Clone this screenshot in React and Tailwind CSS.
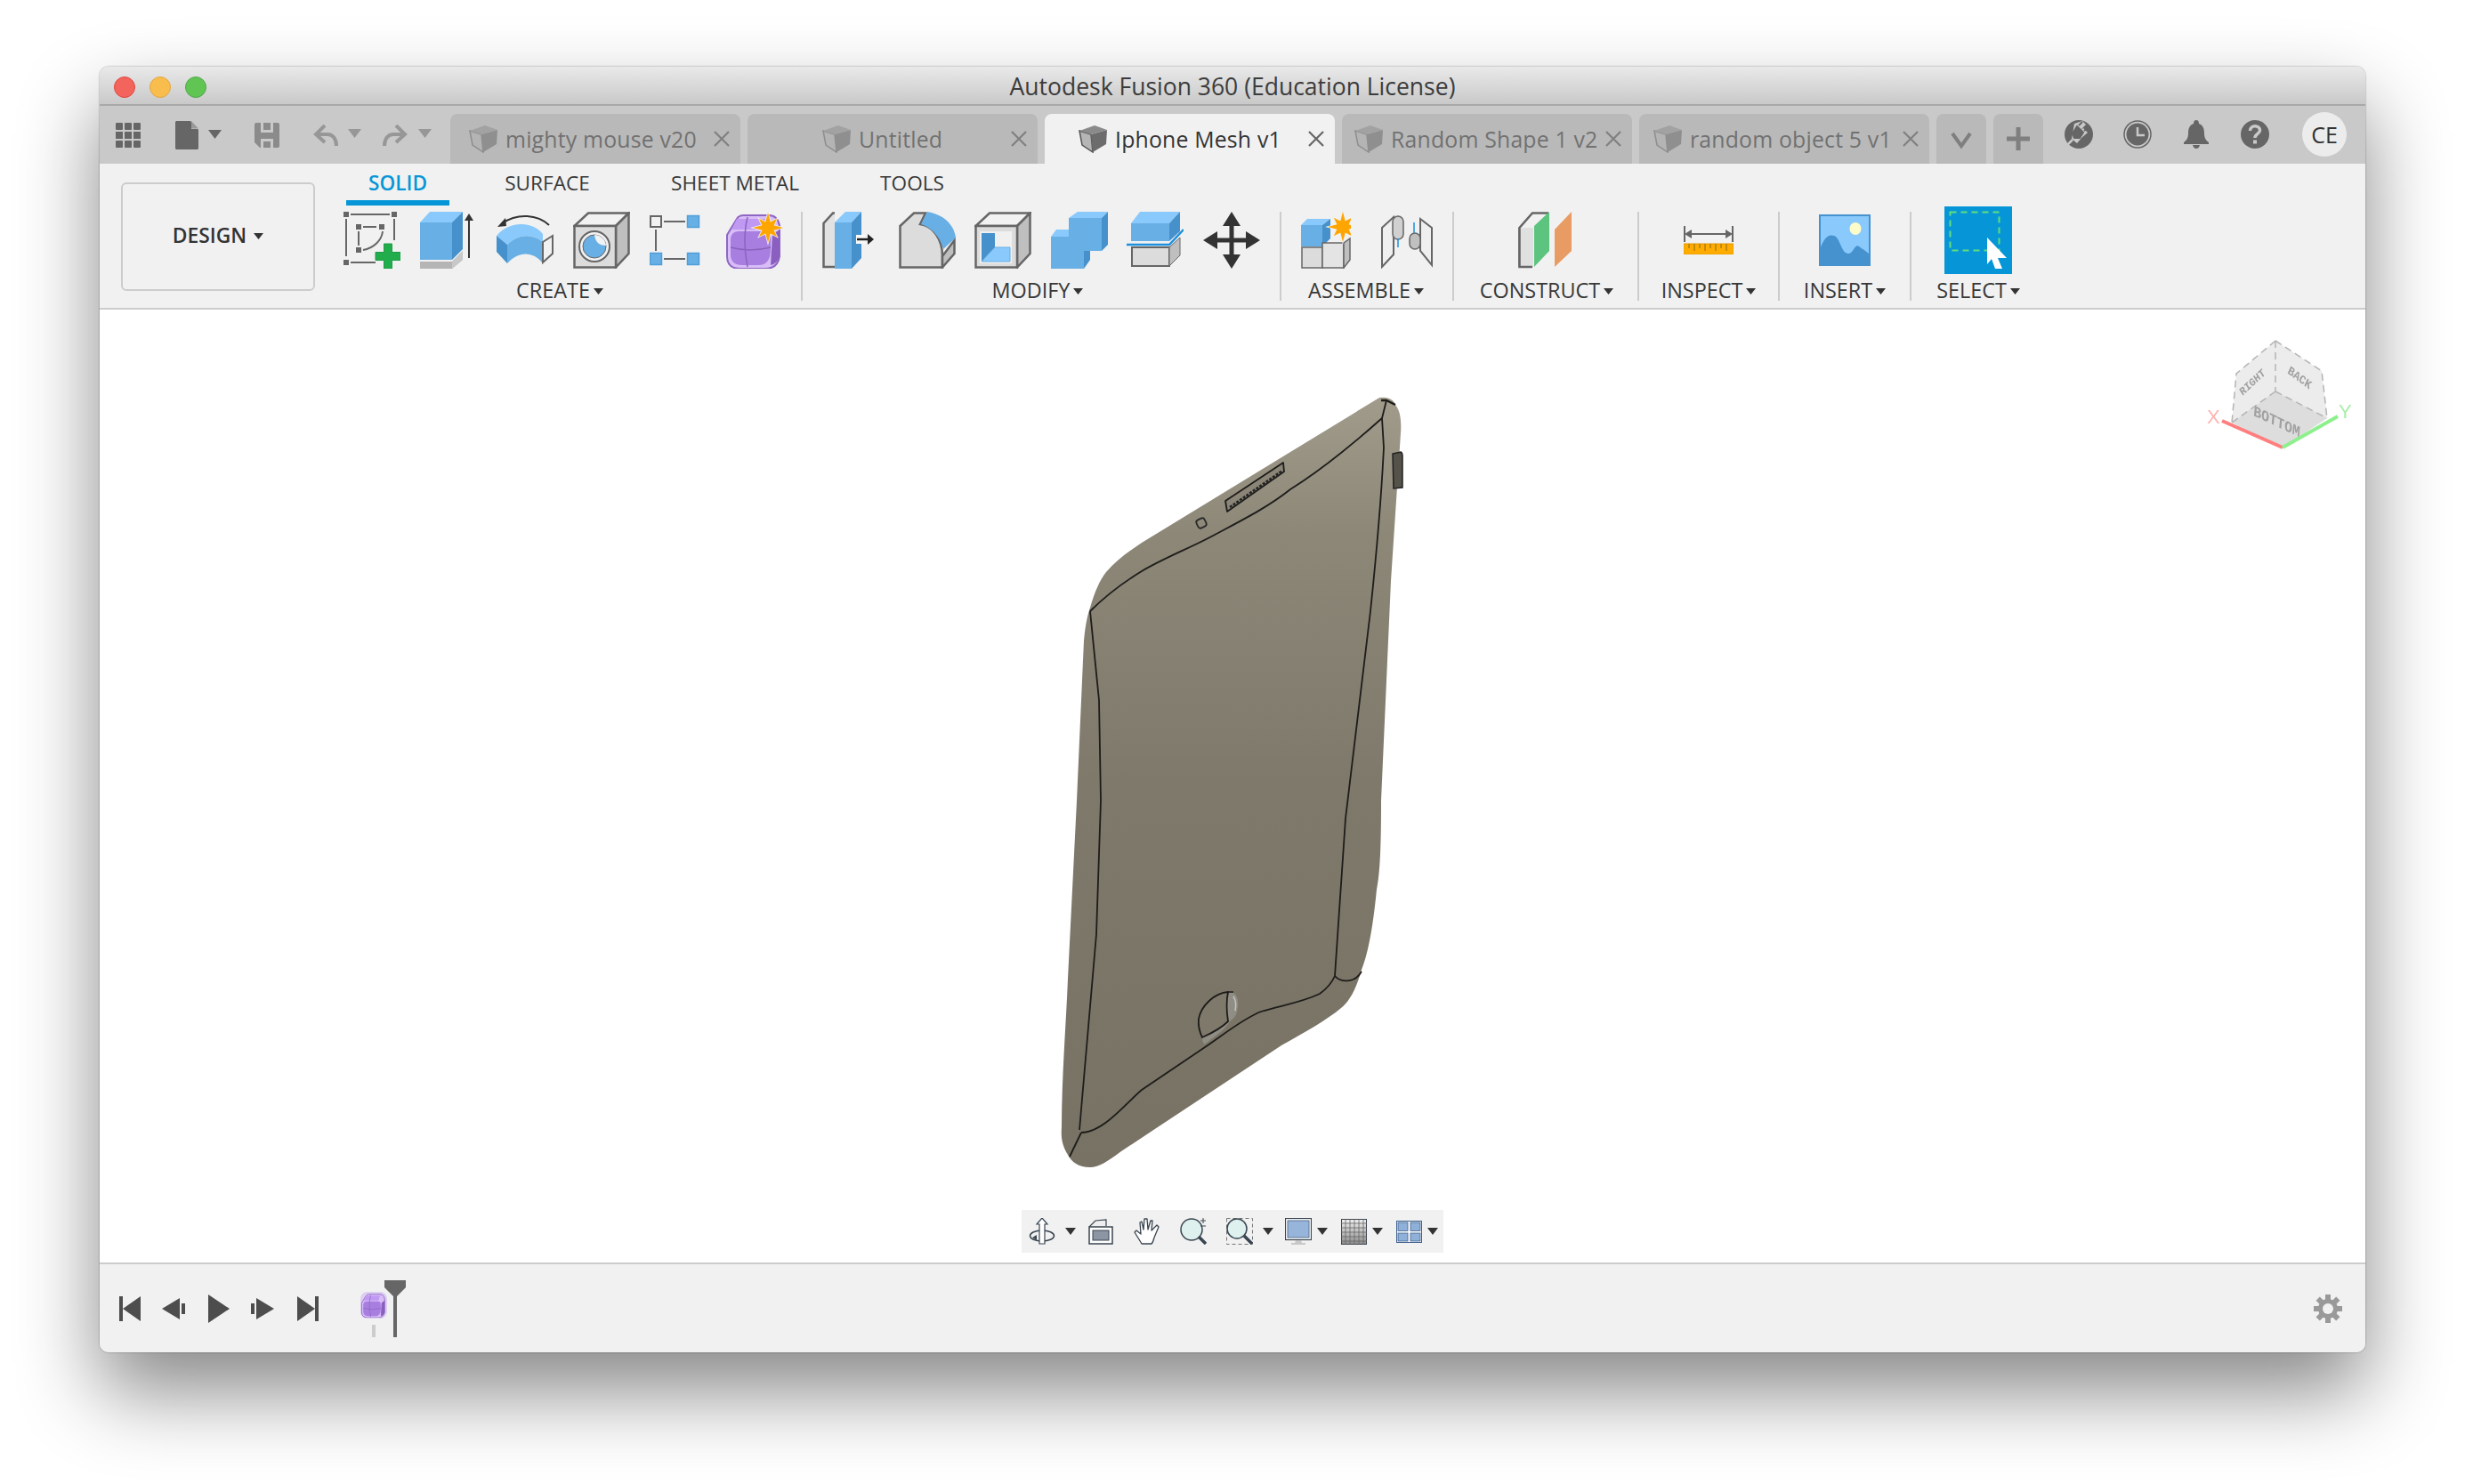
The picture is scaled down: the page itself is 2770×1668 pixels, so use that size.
import React from "react";

const FONT = "font-['Open_Sans','Noto_Sans',sans-serif]";

const BLUE = "#68afe5";
const BLUE_LIGHT = "#8ac9fb";
const BLUE_DARK = "#4691cb";
const LINE = "#666666";

function Star({ cx, cy, r }) {
  const pts = [];
  for (let i = 0; i < 16; i++) {
    const rad = i % 2 === 0 ? (i % 4 === 0 ? r : r * 0.85) : r * 0.42;
    const a = (i * Math.PI) / 8 - Math.PI / 2;
    pts.push(`${cx + rad * Math.cos(a)},${cy + rad * Math.sin(a)}`);
  }
  return <polygon points={pts.join(" ")} fill="#ffa500" stroke="#f2f2f2" strokeWidth="1.5" paintOrder="stroke" />;
}

function Box({ children, w = 64, h = 64 }) {
  return (
    <svg width={w} height={h} viewBox={`0 0 ${w} ${h}`} className="shrink-0">
      {children}
    </svg>
  );
}

const SketchIcon = () => (
  <Box>
    <g fill={LINE}>
      <rect x="0" y="0" width="6" height="6" />
      <rect x="54" y="0" width="6" height="6" />
      <rect x="0" y="54" width="6" height="6" />
      <rect x="14" y="14" width="6" height="6" />
      <rect x="40" y="14" width="6" height="6" />
      <rect x="14" y="40" width="6" height="6" />
    </g>
    <g stroke={LINE} strokeWidth="2" fill="none">
      <path d="M8 3H52M3 8V50M57 8V32M8 57H36M22 17H37M17 22V38M44 22C43 32 34 41 22 43" />
    </g>
    <path d="M45.5 36h9v9.500h9.500v9h-9.500V64h-9v-9.500H36v-9h9.500z" fill="#22ad4d" stroke="#1f9c45" strokeWidth="1" />
  </Box>
);

const ExtrudeIcon = () => (
  <Box>
    <polygon points="0,12 11,0 48,0 36,12" fill={BLUE_LIGHT} />
    <rect x="0" y="12" width="36" height="42" fill={BLUE} />
    <polygon points="36,12 48,0 48,42 36,54" fill={BLUE_DARK} />
    <polygon points="0,56 36,56 48,44 48,54 36,64 0,64" fill="#b5b5b5" />
    <polygon points="36,56 48,44 48,54 36,64" fill="#c8c8c8" />
    <path d="M55 52V8" stroke="#333" strokeWidth="2" />
    <polygon points="50,10 55,2 60,10" fill="#333" />
  </Box>
);

const RevolveIcon = () => (
  <Box>
    <path d="M59 15C46 3 24 1 6 13" stroke="#333" strokeWidth="2" fill="none" />
    <polygon points="1,17 10,7 11,16" fill="#333" />
    <path d="M0 27C14 10 40 10 52 25V34C40 24 24 25 12 37Z" fill={BLUE_LIGHT} />
    <path d="M12 37C24 25 40 24 52 34V58C40 43 24 45 12 58Z" fill={BLUE} />
    <path d="M0 27L12 37V58L0 45Z" fill={BLUE_DARK} />
    <polygon points="52,34 63,27 63,47 52,57" fill="#f2f2f2" stroke={LINE} strokeWidth="2" />
  </Box>
);

const HoleIcon = () => (
  <Box>
    <polygon points="1.500,16 17,1.500 62.500,1.500 48,16" fill="#f2f2f2" stroke={LINE} strokeWidth="2.500" />
    <polygon points="48,16 62.500,1.500 62.500,47 48,62.500" fill="#bfbfbf" stroke={LINE} strokeWidth="2.500" />
    <rect x="1.500" y="16" width="46.500" height="46.500" fill="#dcdcdc" stroke={LINE} strokeWidth="2.500" />
    <circle cx="24" cy="39" r="17" fill="#f2f2f2" stroke={LINE} strokeWidth="2" />
    <circle cx="24" cy="39" r="13" fill={BLUE} stroke={LINE} strokeWidth="1" />
    <path d="M24 26C25 34 29 38 37 38A13 13 0 0 0 24 26Z" fill="#f2f2f2" />
  </Box>
);

const PatternIcon = () => (
  <Box>
    <rect x="1" y="5" width="12" height="12" fill="#f2f2f2" stroke={LINE} strokeWidth="2" />
    <g fill={BLUE} stroke="#4f9fda" strokeWidth="1.500">
      <rect x="42.500" y="4.500" width="13" height="13" />
      <rect x="0.500" y="46.500" width="13" height="13" />
      <rect x="42.500" y="46.500" width="13" height="13" />
    </g>
    <path d="M16 11H40M16 53H40M7 20V44" stroke={LINE} strokeWidth="2" />
  </Box>
);

const FormIcon = ({ size = 64, star = true }) => (
  <svg width={size} height={size} viewBox="0 0 64 64" className="shrink-0">
    <path d="M1 26L12 8Q14 4 20 4H48Q58 4 60 16V50Q58 64 44 64H16Q1 64 1 50Z" fill="#d8bdf7" stroke="#8f66c4" strokeWidth="2" />
    <path d="M5 32Q5 22 14 22H44Q50 22 50 30V42Q50 60 36 60H18Q5 60 5 48Z" fill="#a87fe0" />
    <path d="M12 8H48L44 20H6Z" fill="#c09af2" />
    <path d="M52 26L60 20V50Q58 58 50 60Z" fill="#8a5fc0" />
    <path d="M5 40Q26 46 50 40M24 6Q18 30 24 62" stroke="#8a63bd" strokeWidth="1.500" fill="none" />
    {star && <Star cx={47} cy={18} r={17} />}
  </svg>
);

const PressPullIcon = () => (
  <Box>
    <path d="M14 1.500H12L1.500 13V62H14" fill="#e2e2e2" stroke={LINE} strokeWidth="2.500" />
    <polygon points="14,12 26,0 44,0 33,12" fill={BLUE_LIGHT} />
    <rect x="14" y="12" width="19" height="52" fill={BLUE} />
    <polygon points="33,12 44,0 44,52 33,64" fill={BLUE_DARK} />
    <rect x="38" y="26" width="10" height="10" fill="#f8f8f8" />
    <path d="M39 31H52" stroke="#222" strokeWidth="2.500" />
    <polygon points="51,25 58,31 51,37" fill="#222" />
  </Box>
);

const FilletIcon = () => (
  <Box>
    <path d="M1.500 16L17 1.500H30L24 14C38 16 49 30 49 50V62.500H1.500Z" fill="#dcdcdc" stroke={LINE} strokeWidth="2.500" />
    <path d="M49 50L62.500 32V47L49 62.500Z" fill="#bfbfbf" stroke={LINE} strokeWidth="2.500" />
    <path d="M32 0C50 3 62 14 64 29L50 42C47 30 38 18 25 14Z" fill={BLUE} />
  </Box>
);

const ShellIcon = () => (
  <Box>
    <polygon points="1.500,16 17,1.500 62.500,1.500 48,16" fill="#f2f2f2" stroke={LINE} strokeWidth="2.500" />
    <polygon points="48,16 62.500,1.500 62.500,47 48,62.500" fill="#bfbfbf" stroke={LINE} strokeWidth="2.500" />
    <rect x="1.500" y="16" width="46.500" height="46.500" fill="#dcdcdc" stroke={LINE} strokeWidth="2.500" />
    <rect x="6" y="22" width="36" height="36" fill="#f0f0f0" />
    <polygon points="8,24 23,24 23,40 8,56" fill={BLUE_DARK} />
    <polygon points="8,56 23,40 40,40 40,56" fill={BLUE_LIGHT} stroke="#68afe5" strokeWidth="1" />
  </Box>
);

const CombineIcon = () => (
  <Box>
    <polygon points="20,7 30,0 64,0 57,7" fill={BLUE_LIGHT} />
    <rect x="20" y="7" width="37" height="37" fill={BLUE} />
    <polygon points="57,7 64,0 64,37 57,44" fill={BLUE_DARK} />
    <polygon points="0,28 6,20 20,20 20,28" fill={BLUE_LIGHT} />
    <rect x="0" y="28" width="37" height="36" fill={BLUE} />
    <rect x="20" y="28" width="37" height="16" fill={BLUE} />
    <polygon points="37,44 44,44 44,54 37,64" fill={BLUE_DARK} />
  </Box>
);

const SplitIcon = () => (
  <Box>
    <polygon points="5,13 15,0 60,0 48,13" fill={BLUE_LIGHT} />
    <rect x="5" y="13" width="43" height="20" fill={BLUE} />
    <polygon points="48,13 60,0 60,22 48,33" fill={BLUE_DARK} />
    <path d="M0 37H48L64 20" stroke="#1e90dc" strokeWidth="2.500" fill="none" />
    <rect x="6" y="40" width="42" height="21" fill="#dcdcdc" stroke={LINE} strokeWidth="2" />
    <polygon points="48,40 60,29 60,49 48,61" fill="#bfbfbf" stroke={LINE} strokeWidth="1" />
  </Box>
);

const MoveIcon = () => (
  <Box>
    <path d="M32 8V56M8 32H56" stroke="#333" strokeWidth="5" />
    <polygon points="32,0 42,16 22,16" fill="#333" />
    <polygon points="32,64 42,48 22,48" fill="#333" />
    <polygon points="0,32 16,22 16,42" fill="#333" />
    <polygon points="64,32 48,22 48,42" fill="#333" />
  </Box>
);

const NewComponentIcon = () => (
  <Box w={56}>
    <polygon points="0,15 7,8 33,8 24,15" fill={BLUE_LIGHT} />
    <rect x="0" y="15" width="24" height="24" fill={BLUE} />
    <polygon points="24,15 33,8 33,30 24,39" fill={BLUE_DARK} />
    <rect x="1" y="40" width="23" height="23" fill="#dcdcdc" stroke={LINE} strokeWidth="1.500" />
    <rect x="24" y="35" width="24" height="28" fill="#e4e4e4" stroke={LINE} strokeWidth="1.500" />
    <polygon points="48,35 55,30 55,54 48,63" fill="#bfbfbf" stroke={LINE} strokeWidth="1.500" />
    <Star cx={47} cy={17} r={17} />
  </Box>
);

const JointIcon = () => (
  <Box w={58}>
    <path d="M1 18L14 6V48L1 62Z" fill="#efefef" stroke={LINE} strokeWidth="2" />
    <rect x="13" y="5" width="12" height="26" rx="6" fill="#d0d0d0" stroke={LINE} strokeWidth="1.500" />
    <path d="M57 18L44 8V44L57 60Z" fill="#efefef" stroke={LINE} strokeWidth="2" />
    <rect x="32" y="24" width="12" height="18" rx="6" fill="#c0c0c0" stroke={LINE} strokeWidth="1.500" />
    <path d="M37 12V24M19 30V40" stroke="#1e90dc" strokeWidth="1.500" fill="none" />
  </Box>
);

const ConstructIcon = () => (
  <Box w={62}>
    <path d="M1.500 62V18L16 1.500H34" fill="none" stroke={LINE} strokeWidth="2.500" />
    <rect x="2" y="18" width="15" height="44" fill="#e0e0e0" />
    <path d="M1.500 18V62H16" fill="none" stroke={LINE} strokeWidth="2.500" />
    <polygon points="18,16 35,0 35,44 18,62" fill="#5cc47f" />
    <polygon points="41,20 60,0 60,44 41,62" fill="#e89b62" />
  </Box>
);

const InspectIcon = () => (
  <Box w={56} h={32}>
    <path d="M1 0V18M55 0V18M6 9H50" stroke={LINE} strokeWidth="2" />
    <polygon points="1,9 9,4 9,14" fill={LINE} />
    <polygon points="55,9 47,4 47,14" fill={LINE} />
    <rect x="0" y="20" width="56" height="12" fill="#ffab00" stroke="#e59a00" strokeWidth="1" />
    <path d="M6 20V25M12 20V28M18 20V25M24 20V28M30 20V25M36 20V28M42 20V25M48 20V28" stroke="#8a6a14" strokeWidth="1" />
  </Box>
);

const InsertIcon = () => (
  <Box w={58} h={58}>
    <rect x="1" y="1" width="56" height="56" fill={BLUE_LIGHT} stroke="#4592cf" strokeWidth="2" />
    <ellipse cx="41" cy="16" rx="6.500" ry="7" fill="#fdfcc8" />
    <path d="M0 42C6 24 12 22 17 24C24 26 25 44 33 44C39 44 40 32 45 36C50 40 52 40 58 46V58H0Z" fill="#4592cf" />
  </Box>
);

const SelectIcon = () => (
  <svg width="76" height="76" viewBox="0 0 76 76" className="shrink-0 bg-[#0696d7]">
    <rect x="6.500" y="6.500" width="55" height="43" fill="none" stroke="#62dd7c" strokeWidth="2" strokeDasharray="7 5" />
    <polygon points="48,35 70,58 60,58 65,70 57,70 53,59 48,65" fill="#fff" />
  </svg>
);

const Caret = ({ className = "" }) => (
  <svg width="11" height="7" viewBox="0 0 11 7" className={`shrink-0 ${className}`}>
    <polygon points="0,0 11,0 5.500,7" fill="#333" />
  </svg>
);

function Group({ className, icons, gap, label, labelClass = "" }) {
  return (
    <div className={`relative flex flex-col items-center ${className}`}>
      <div className={`flex h-[64px] items-center ${gap}`}>{icons}</div>
      <div className={`mt-[14px] flex h-[22px] items-center gap-[4px] text-[23.400px] leading-none text-[#383838] ${labelClass}`}>
        {label}
        <Caret />
      </div>
    </div>
  );
}

const TabCube = ({ dark }) => (
  <svg width="33" height="31" viewBox="0 0 33 31" className="shrink-0">
    <polygon points="1,6 14,10 16,30 4,22" fill={dark ? "#b5b5b5" : "#b4b4b4"} stroke={dark ? "#555" : "#8e8e8e"} strokeWidth="1.500" />
    <polygon points="14,10 32,5 31,21 16,30" fill={dark ? "#6c6c6c" : "#8f8f8f"} />
    <polygon points="1,6 18,0 32,5 14,10" fill={dark ? "#8a8a8a" : "#a2a2a2"} />
  </svg>
);

function DocTab({ title, active, pad }) {
  return (
    <div
      className={`relative flex h-[56px] w-[326px] shrink-0 items-center rounded-t-[8px] ${
        active ? "bg-[#f1f1f1] text-[#333]" : "bg-[#b9b9b9] text-[#717171]"
      } ${pad}`}
    >
      <TabCube dark={active} />
      <span className="ml-[8px] whitespace-nowrap text-[24.800px] leading-none tracking-[0.2px]">{title}</span>
      <svg width="18" height="18" viewBox="0 0 18 18" className="absolute right-[12px] top-[19px]">
        <path d="M1 1L17 17M17 1L1 17" stroke={active ? "#666" : "#808080"} strokeWidth="2.200" />
      </svg>
    </div>
  );
}

function HeaderBar() {
  return (
    <div className="flex h-[65px] shrink-0 items-end bg-[#c9c9c9]">
      <div className="flex h-[56px] w-[394px] shrink-0 items-start pl-[18px] pt-[8px]">
        <svg width="28" height="28" viewBox="0 0 28 28" className="mt-[2px]">
          <g fill="#666">
            <rect x="0" y="0" width="8" height="8" rx="1" />
            <rect x="10" y="0" width="8" height="8" rx="1" />
            <rect x="20" y="0" width="8" height="8" rx="1" />
            <rect x="0" y="10" width="8" height="8" />
            <rect x="10" y="10" width="8" height="8" />
            <rect x="20" y="10" width="8" height="8" />
            <rect x="0" y="20" width="8" height="8" rx="1" />
            <rect x="10" y="20" width="8" height="8" rx="1" />
            <rect x="20" y="20" width="8" height="8" rx="1" />
          </g>
        </svg>
        <svg width="26" height="32" viewBox="0 0 26 32" className="ml-[39px]">
          <path d="M1 0H17L26 10V31L25 32H1L0 31V1Z" fill="#666" />
          <path d="M18 0L26 9H18Z" fill="#c9c9c9" />
          <path d="M18 0L26 8.500H18Z" fill="#999" />
        </svg>
        <svg width="15" height="10" viewBox="0 0 15 10" className="ml-[11px] mt-[10px]">
          <polygon points="0,0 15,0 7.500,10" fill="#666" />
        </svg>
        <svg width="28" height="28" viewBox="0 0 28 28" className="ml-[37px] mt-[2px]">
          <path d="M2 0H26Q28 0 28 2V26Q28 28 26 28H6L0 22V2Q0 0 2 0Z" fill="#8b8b8b" />
          <path d="M7 0H21V11H7ZM7 18H21V28H7Z" fill="#c9c9c9" />
          <path d="M10 0H18V8H10ZM10 21H18V28H10Z" fill="#8b8b8b" />
        </svg>
        <svg width="28" height="25" viewBox="0 0 28 25" className="ml-[38px] mt-[4px]">
          <path d="M3 11H16C22 11 26 16 26 24" fill="none" stroke="#979797" strokeWidth="4" />
          <path d="M13 1L3 11L13 20" fill="none" stroke="#979797" strokeWidth="4" />
        </svg>
        <svg width="15" height="10" viewBox="0 0 15 10" className="ml-[11px] mt-[9px]">
          <polygon points="0,0 15,0 7.500,10" fill="#979797" />
        </svg>
        <svg width="28" height="25" viewBox="0 0 28 25" className="ml-[24px] mt-[4px]">
          <path d="M25 11H12C6 11 2 16 2 24" fill="none" stroke="#979797" strokeWidth="4" />
          <path d="M15 1L25 11L15 20" fill="none" stroke="#979797" strokeWidth="4" />
        </svg>
        <svg width="15" height="10" viewBox="0 0 15 10" className="ml-[12px] mt-[9px]">
          <polygon points="0,0 15,0 7.500,10" fill="#979797" />
        </svg>
      </div>
      <div className="flex gap-[8px]">
        <DocTab title="mighty mouse v20" pad="pl-[21px]" />
        <DocTab title="Untitled" pad="pl-[84px]" />
        <DocTab title="Iphone Mesh v1" active pad="pl-[38px]" />
        <DocTab title="Random Shape 1 v2" pad="pl-[14px]" />
        <DocTab title="random object 5 v1" pad="pl-[16px]" />
        <div className="flex h-[56px] w-[56px] items-center justify-center rounded-t-[8px] bg-[#b9b9b9]">
          <svg width="26" height="26" viewBox="0 0 26 26">
            <path d="M3 7L13 21L23 7" fill="none" stroke="#7f7f7f" strokeWidth="4" />
          </svg>
        </div>
        <div className="flex h-[56px] w-[56px] items-center justify-center rounded-t-[8px] bg-[#b9b9b9]">
          <svg width="26" height="26" viewBox="0 0 26 26">
            <path d="M13 0V26M0 13H26" stroke="#7f7f7f" strokeWidth="5" />
          </svg>
        </div>
      </div>
      <div className="flex h-[65px] flex-1 items-center pl-[24px] pb-[1px]">
        <svg width="32" height="32" viewBox="0 0 32 32">
          <circle cx="16" cy="16" r="16" fill="#666" />
          <path d="M11 4L20 1L24 5L17 12L21 9L26 14L19 20L14 26L8 21Z" fill="#c9c9c9" />
          <path d="M14 7L21 14L17 20H11L9 15ZM16 6L20 2M22 12L27 8" fill="#666" stroke="#666" strokeWidth="2" />
          <path d="M9 22L3 28" stroke="#c9c9c9" strokeWidth="2.500" />
        </svg>
        <svg width="32" height="32" viewBox="0 0 32 32" className="ml-[34px]">
          <circle cx="16" cy="16" r="15" fill="none" stroke="#666" strokeWidth="1.500" />
          <circle cx="16" cy="16" r="12.500" fill="#666" />
          <path d="M16 8V17H24" fill="none" stroke="#c9c9c9" strokeWidth="2.500" />
        </svg>
        <svg width="28" height="32" viewBox="0 0 28 32" className="ml-[36px]">
          <path d="M14 0Q17 0 17 4C22 6 23 10 23 15C23 20 25 23 28 25V27H0V25C3 23 5 20 5 15C5 10 6 6 11 4Q11 0 14 0Z" fill="#666" />
          <path d="M10 28H18Q17 32 14 32Q11 32 10 28Z" fill="#666" />
        </svg>
        <svg width="32" height="32" viewBox="0 0 32 32" className="ml-[36px]">
          <circle cx="16" cy="16" r="16" fill="#666" />
          <path d="M10.500 12C10.500 5 21.500 5 21.500 11.500C21.500 15.500 16 15.500 16 20" fill="none" stroke="#c9c9c9" strokeWidth="3.500" />
          <rect x="14" y="22.500" width="4" height="4" fill="#c9c9c9" />
        </svg>
        <div className="ml-[37px] flex h-[50px] w-[50px] items-center justify-center rounded-full bg-[#ececec] text-[25px] leading-none text-[#333]">
          CE
        </div>
      </div>
    </div>
  );
}

function Ribbon() {
  return (
    <div className="flex h-[164px] shrink-0 border-b-2 border-[#cccccc] bg-[#f1f1f1] pl-[24px]">
      <div className="mt-[21px] flex h-[122px] w-[218px] items-center justify-center gap-[8px] rounded-[6px] border-2 border-[#cccccc] pb-[2px] text-[22.800px] font-semibold leading-none text-[#333]">
        DESIGN
        <Caret />
      </div>
      <div className="ml-[18px] flex flex-1 flex-col">
        <div className="flex h-[47px] shrink-0 pl-[17px] text-[22.600px] leading-none text-[#383838]">
          <div className="flex w-[116px] justify-center border-b-[6px] border-[#0696d7] pt-[11px] font-semibold text-[#0696d7]">SOLID</div>
          <div className="ml-[52px] flex w-[116px] justify-center pt-[11px]">SURFACE</div>
          <div className="ml-[71px] flex w-[164px] justify-center pt-[11px]">SHEET METAL</div>
          <div className="ml-[59px] flex w-[116px] justify-center pt-[11px]">TOOLS</div>
        </div>
        <div className="mt-[7px] flex">
          <Group
            className="w-[528px]"
            gap="gap-[22px] pr-[6px]"
            label="CREATE"
            labelClass="mr-[14px]"
            icons={<><SketchIcon /><ExtrudeIcon /><RevolveIcon /><HoleIcon /><PatternIcon /><FormIcon /></>}
          />
          <Group
            className="w-[538px] border-l-2 border-[#cccccc]"
            gap="gap-[21.600px]"
            label="MODIFY"
            labelClass="mr-[8px]"
            icons={<><PressPullIcon /><FilletIcon /><ShellIcon /><CombineIcon /><SplitIcon /><MoveIcon /></>}
          />
          <Group
            className="w-[194px] border-l-2 border-[#cccccc]"
            gap="gap-[34px]"
            label="ASSEMBLE"
            labelClass="mr-[2px]"
            icons={<><NewComponentIcon /><JointIcon /></>}
          />
          <Group className="w-[208px] border-l-2 border-[#cccccc]" gap="" label="CONSTRUCT" labelClass="ml-[2px]" icons={<ConstructIcon />} />
          <Group className="w-[158px] border-l-2 border-[#cccccc]" gap="" label="INSPECT" icons={<InspectIcon />} />
          <Group className="w-[148px] border-l-2 border-[#cccccc]" gap="" label="INSERT" icons={<InsertIcon />} />
          <Group className="w-[152px] border-l-2 border-[#cccccc]" gap="" label="SELECT" icons={<SelectIcon />} />
        </div>
      </div>
    </div>
  );
}

function Phone() {
  return (
    <svg width="390" height="870" viewBox="1190 445 390 870" className="shrink-0">
      <defs>
        <linearGradient id="body" x1="0" y1="0" x2="0" y2="1">
          <stop offset="0" stopColor="#a09b8b" />
          <stop offset="0.18" stopColor="#8d8778" />
          <stop offset="0.5" stopColor="#7f796b" />
          <stop offset="1" stopColor="#787265" />
        </linearGradient>
      </defs>
      <path
        d="M1550 447C1558 446 1566 448 1568 455C1574 462 1575 475 1574 487L1563 653L1552 900C1552 950 1551 980 1547 1000C1543 1040 1538 1070 1530 1090C1524 1112 1516 1126 1507 1133C1490 1147 1470 1158 1440 1175L1260 1294C1245 1305 1235 1312 1225 1312C1212 1312 1204 1306 1200 1298C1194 1288 1192 1280 1193 1267C1193 1210 1198 1150 1200 1100L1210 900L1218 720C1220 700 1222 692 1225 683C1230 665 1236 652 1243 643C1254 630 1268 620 1283 610Z"
        fill="url(#body)"
      />
      <g fill="none" stroke="#1d1c1a" strokeWidth="1.800">
        <path d="M1225 687C1240 672 1260 656 1283 642C1310 626 1340 615 1367 600C1395 585 1425 570 1450 550C1490 525 1525 495 1553 470" />
        <path d="M1558 450L1553 470L1555 503C1552 565 1546 630 1540 687L1512 920L1500 1097" />
        <path d="M1500 1097C1506 1104 1522 1106 1530 1092" />
        <path d="M1500 1097C1496 1106 1490 1112 1483 1117C1462 1127 1440 1130 1417 1137C1395 1146 1375 1163 1357 1175L1283 1225C1265 1240 1240 1273 1215 1273" />
        <path d="M1225 687L1235 787L1237 900L1232 1050L1213 1270" />
        <path d="M1215 1273L1202 1300" />
        <path d="M1552 450L1558 450L1568 455" strokeWidth="2.500" />
      </g>
      <path d="M1377 563L1442 520L1443 530L1379 575Z" fill="#8a8577" stroke="#1d1c1a" strokeWidth="1.800" strokeLinejoin="round" />
      <path d="M1382 570L1441 529" stroke="#222" strokeWidth="2.500" strokeDasharray="3 1.500" />
      <rect x="1345" y="583" width="10" height="10" rx="3" fill="none" stroke="#2a2a28" strokeWidth="1.800" transform="rotate(-25 1350 588)" />
      <path d="M1565 510L1574 508Q1576 509 1576 512V548L1566 549Z" fill="#55524a" stroke="#222" strokeWidth="1.500" />
      <path d="M1380 1116C1388 1114 1392 1120 1391 1132C1390 1140 1388 1144 1382 1148C1378 1155 1370 1162 1353 1174L1350 1166Z" fill="#8f8d84" />
      <path d="M1386 1120Q1390 1126 1388 1136" stroke="#c4c4be" strokeWidth="1.500" fill="none" />
      <path d="M1380 1115C1365 1116 1350 1130 1347 1145C1346 1155 1349 1162 1351 1166C1360 1162 1372 1156 1380 1148C1378 1135 1378 1125 1380 1115Z" fill="#7f796b" stroke="#1d1c1a" strokeWidth="1.800" />
      <path d="M1380 1115H1386" stroke="#1d1c1a" strokeWidth="1.500" />
    </svg>
  );
}

function ViewCube() {
  return (
    <svg width="170" height="127" viewBox="0 0 170 127" className="absolute right-[8px] top-[33px] blur-[0.7px]">
      <polygon points="28,94 85,122 135,89 129,36 77,2 33,39" fill="#ececec" />
      <polygon points="28,94 77,59 135,89 85,122" fill="#dddddd" />
      <g fill="none" stroke="#b4b4b4" strokeWidth="1.500" strokeDasharray="8 5">
        <path d="M77 2L33 39L28 94M77 2L129 36L135 89M77 2V59M77 59L28 94M77 59L135 89" />
      </g>
      <g fill="#a0a0a0" fontSize="12" fontWeight="700" className="font-['Liberation_Mono',monospace]">
        <text x="0" y="0" transform="translate(40 64) rotate(-43) skewX(-10)">RIGHT</text>
        <text x="0" y="0" transform="translate(90 38) rotate(37) skewX(12)" fontSize="13">BACK</text>
        <text x="0" y="0" transform="translate(52 86) rotate(25) skewX(20)" fontSize="16">BOTTOM</text>
      </g>
      <path d="M17 92L85 122" stroke="#ff7f7f" strokeWidth="4" />
      <path d="M85 122L147 87" stroke="#8df08d" strokeWidth="4" />
      <text x="0" y="95" fontSize="22" fill="#ffb3b3" className="font-['Liberation_Sans',sans-serif]">X</text>
      <text x="148" y="89" fontSize="22" fill="#a8eea8" className="font-['Liberation_Sans',sans-serif]">Y</text>
    </svg>
  );
}

const NavCaret = ({ className = "" }) => (
  <svg width="12" height="8" viewBox="0 0 12 8" className={`shrink-0 ${className}`}>
    <polygon points="0,0 12,0 6,8" fill="#333" />
  </svg>
);

function NavBar() {
  const ink = "#3a4550";
  return (
    <div className="mb-[11px] mt-auto flex h-[48px] w-[474px] shrink-0 items-center bg-[#f1f1f1] pl-[8px]">
      <svg width="30" height="30" viewBox="0 0 30 30">
        <ellipse cx="15" cy="20" rx="13.500" ry="6" fill="none" stroke={ink} strokeWidth="1.500" />
        <path d="M15 0L21 7H18V29H12V7H9Z" fill="#fff" stroke={ink} strokeWidth="1.200" />
        <polygon points="4,22 9,19 9,25" fill={ink} />
      </svg>
      <NavCaret className="ml-[11px]" />
      <svg width="28" height="30" viewBox="0 0 28 30" className="ml-[14px]">
        <path d="M1 10L8 3L20 2V9" fill="#eee" stroke={ink} strokeWidth="1.200" />
        <rect x="1" y="10" width="26" height="19" fill="#fff" stroke={ink} strokeWidth="1.500" />
        <rect x="5" y="14" width="18" height="11" fill="#8b95a4" stroke={ink} strokeWidth="1" />
      </svg>
      <svg width="30" height="30" viewBox="0 0 30 30" className="ml-[23px]">
        <path d="M9 29C6 24 4 21 1 16L3 14L8 18L7 5L9 4L11 13L12 1H15L16 13L19 3L21 3L20 14L26 8L28 10L23 22C22 26 21 28 20 29Z" fill="#fff" stroke={ink} strokeWidth="1.300" strokeLinejoin="round" />
      </svg>
      <svg width="30" height="30" viewBox="0 0 30 30" className="ml-[22px]">
        <circle cx="13" cy="13" r="12" fill="#dff1ee" stroke={ink} strokeWidth="1.500" />
        <path d="M21 21L29 29" stroke={ink} strokeWidth="3.500" />
        <path d="M23 3H29M26 0V6M23 9H29" stroke={ink} strokeWidth="1" />
      </svg>
      <svg width="30" height="30" viewBox="0 0 30 30" className="ml-[22px]">
        <rect x="0.500" y="0.500" width="29" height="29" fill="none" stroke="#777" strokeDasharray="4 3" />
        <circle cx="12" cy="12" r="11" fill="#dff1ee" stroke={ink} strokeWidth="1.500" />
        <path d="M20 20L29 29" stroke={ink} strokeWidth="3.500" />
      </svg>
      <NavCaret className="ml-[11px]" />
      <svg width="30" height="30" viewBox="0 0 30 30" className="ml-[13px]">
        <rect x="0.500" y="0.500" width="29" height="24" fill="#fff" stroke={ink} strokeWidth="1.200" />
        <rect x="3" y="3" width="24" height="19" fill="#97b5da" stroke="#5b7391" strokeWidth="1" />
        <path d="M12 25H18L19 28H23V30H7V28H11Z" fill="#c8c8c8" />
      </svg>
      <NavCaret className="ml-[6px]" />
      <svg width="29" height="29" viewBox="0 0 29 29" className="ml-[15px]">
        <defs>
          <linearGradient id="grid" x1="0" y1="0" x2="0" y2="1">
            <stop offset="0" stopColor="#f0f0f0" />
            <stop offset="1" stopColor="#8d8d8d" />
          </linearGradient>
        </defs>
        <rect x="0.500" y="0.500" width="28" height="28" fill="url(#grid)" stroke={ink} strokeWidth="1" />
        <path d="M5 0V29M10 0V29M15 0V29M20 0V29M25 0V29M0 5H29M0 10H29M0 15H29M0 20H29M0 25H29" stroke="#666" strokeWidth="0.800" />
      </svg>
      <NavCaret className="ml-[6px]" />
      <svg width="29" height="25" viewBox="0 0 29 25" className="ml-[15px]">
        <rect x="0.500" y="0.500" width="28" height="24" fill="#fff" stroke="#40628f" strokeWidth="1" />
        <g fill="#8fb0d8" stroke="#40628f" strokeWidth="0.800">
          <rect x="2" y="2" width="11" height="9.500" />
          <rect x="16" y="2" width="11" height="9.500" />
          <rect x="2" y="14" width="11" height="9" />
          <rect x="16" y="14" width="11" height="9" />
        </g>
      </svg>
      <NavCaret className="ml-[6px]" />
    </div>
  );
}

function Timeline() {
  const c = "#4d4d4d";
  return (
    <div className="flex h-[99px] shrink-0 items-center rounded-b-[10px] bg-[#f1f1f1] pl-[22px]">
      <svg width="24" height="28" viewBox="0 0 24 28">
        <rect x="0" y="0" width="4" height="28" fill={c} />
        <polygon points="24,0 4,14 24,28" fill={c} />
      </svg>
      <svg width="26" height="24" viewBox="0 0 26 24" className="ml-[24px]">
        <polygon points="20,0 0,12 20,24" fill={c} />
        <rect x="22" y="6" width="4" height="12" fill={c} />
      </svg>
      <svg width="24" height="32" viewBox="0 0 24 32" className="ml-[26px]">
        <polygon points="0,0 24,16 0,32" fill={c} />
      </svg>
      <svg width="26" height="24" viewBox="0 0 26 24" className="ml-[24px]">
        <rect x="0" y="6" width="4" height="12" fill={c} />
        <polygon points="6,0 26,12 6,24" fill={c} />
      </svg>
      <svg width="24" height="28" viewBox="0 0 24 28" className="ml-[26px]">
        <polygon points="0,0 20,14 0,28" fill={c} />
        <rect x="20" y="0" width="4" height="28" fill={c} />
      </svg>
      <div className="ml-[47px] flex h-[64px] flex-col items-center justify-end">
        <div className="rounded-[8px] bg-[#dccff0] p-[1px]">
          <FormIcon size={28} star={false} />
        </div>
        <div className="mt-[7px] h-[14px] w-[4px] bg-[#cccccc]" />
      </div>
      <svg width="24" height="64" viewBox="0 0 24 64" className="ml-[-3px]">
        <path d="M0 0H24V8L14 18V64H10V18L0 8Z" fill="#666" />
      </svg>
      <svg width="32" height="32" viewBox="0 0 32 32" className="ml-auto mr-[26px]">
        <g fill="#999">
          <circle cx="16" cy="16" r="11" />
          <rect x="13" y="0" width="6" height="32" />
          <rect x="0" y="13" width="32" height="6" />
          <rect x="13" y="0" width="6" height="32" transform="rotate(45 16 16)" />
          <rect x="13" y="0" width="6" height="32" transform="rotate(-45 16 16)" />
        </g>
        <circle cx="16" cy="16" r="6" fill="#f1f1f1" />
      </svg>
    </div>
  );
}

export default function App() {
  return (
    <div className={`h-[1668px] w-[2770px] overflow-hidden bg-white pl-[112px] pt-[75px] ${FONT}`}>
      <div className="flex h-[1445px] w-[2546px] flex-col rounded-[10px] shadow-[0_44px_90px_rgba(0,0,0,0.47),0_0_2px_rgba(0,0,0,0.45)]">
        <div className="flex h-[44px] shrink-0 items-center rounded-t-[10px] border-b-2 border-[#a9a9a9] bg-gradient-to-b from-[#e9e9e9] to-[#c9c9c9] pl-[16px] pt-[3px]">
          <div className="flex gap-[16px]">
            <span className="h-[24px] w-[24px] rounded-full border border-[#e2463f] bg-[#f2645c]" />
            <span className="h-[24px] w-[24px] rounded-full border border-[#e1a73e] bg-[#f9bd4e]" />
            <span className="h-[24px] w-[24px] rounded-full border border-[#4fa84a] bg-[#61c554]" />
          </div>
          <div className="flex-1 pr-[120px] text-center text-[26.500px] leading-none text-[#3c3c3c]">Autodesk Fusion 360 (Education License)</div>
        </div>
        <HeaderBar />
        <Ribbon />
        <div className="relative flex min-h-0 flex-1 flex-col items-center border-b-2 border-[#cccccc] bg-white pt-[97px]">
          <Phone />
          <ViewCube />
          <NavBar />
        </div>
        <Timeline />
      </div>
    </div>
  );
}
